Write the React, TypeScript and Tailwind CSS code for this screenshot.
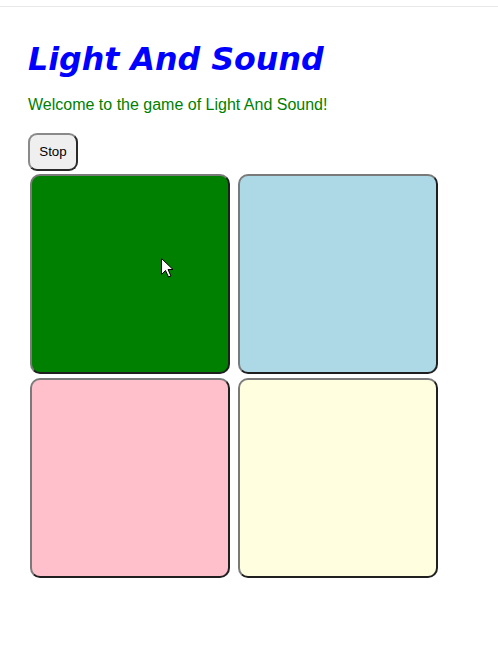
const squares = [
  { name: "green", color: "bg-[#008000]" },
  { name: "blue", color: "bg-[#add8e6]" },
  { name: "pink", color: "bg-[#ffc0cb]" },
  { name: "yellow", color: "bg-[#ffffe0]" },
];

function Cursor() {
  return (
    <svg width="13" height="20" viewBox="0 0 13 20" className="pointer-events-none absolute left-[129px] top-[82px]">
      <path d="M0.5 0.5 L0.5 16.5 L4.5 12.5 L7.5 19 L10 18 L7 11.5 L12 11.5 Z" fill="#fff" stroke="#000" strokeWidth="1" strokeLinejoin="miter" />
    </svg>
  );
}

export default function App() {
  return (
    <div className="min-h-screen bg-white font-['Liberation_Sans',Arial,sans-serif]">
      <div className="h-[6px]" />
      <div className="border-t border-[#e8e8e8]" />
      <div className="pl-7 pt-[33px]">
        <h1 className="font-['DejaVu_Sans',Verdana,sans-serif] text-[31.7px] font-bold italic leading-[38px] text-[#0000ff]">
          Light And Sound
        </h1>
        <p className="mt-[18px] text-base leading-[18px] text-[#008000]">Welcome to the game of Light And Sound!</p>
        <button className="mt-[19px] h-[38px] w-[50px] rounded-[9px] border-2 border-t-[#8a8a8a] border-l-[#8a8a8a] border-b-[#2a2a2a] border-r-[#2a2a2a] bg-[#efefef] text-[13.33px] text-black">
          Stop
        </button>
        <div className="ml-[2px] mt-[3px] grid w-max grid-cols-[200px_200px] gap-x-2 gap-y-1">
          {squares.map((s) => (
            <div
              key={s.name}
              className={`relative h-[200px] w-[200px] rounded-[10px] border-2 border-t-[#7a7a7a] border-l-[#7a7a7a] border-b-[#1f1f1f] border-r-[#1f1f1f] ${s.color}`}
            >
              {s.name === "green" && <Cursor />}
            </div>
          ))}
        </div>
      </div>
    </div>
  );
}
